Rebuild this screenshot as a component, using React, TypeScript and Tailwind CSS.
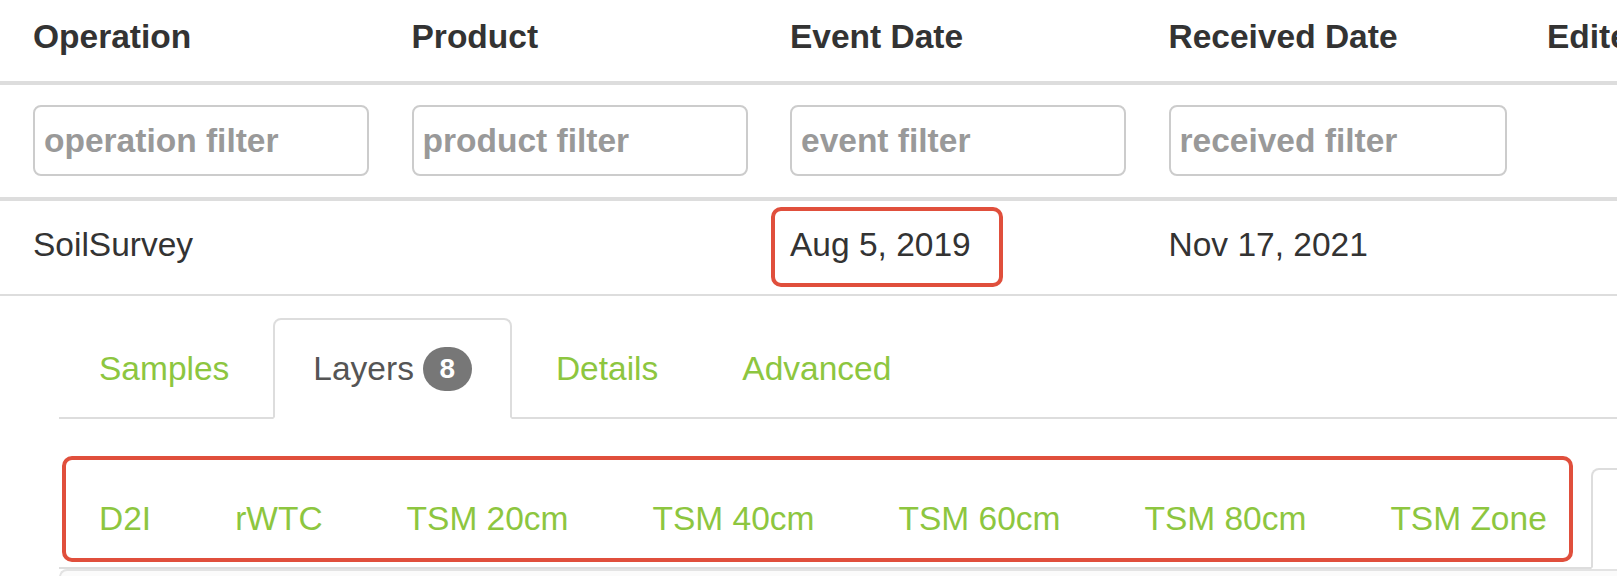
import React from "react";

type Col = {
  head: string;
  filter?: string;
  value?: string;
  marked?: boolean;
  filterWidth?: string;
};

const cols: Col[] = [
  { head: "Operation", filter: "operation filter", value: "SoilSurvey", filterWidth: "w-[336px]" },
  { head: "Product", filter: "product filter", filterWidth: "w-[336px]" },
  { head: "Event Date", filter: "event filter", value: "Aug 5, 2019", marked: true, filterWidth: "w-[336px]" },
  { head: "Received Date", filter: "received filter", value: "Nov 17, 2021", filterWidth: "w-[338px]" },
  { head: "Edited Date" },
];

const mainTabs = [
  { label: "Samples" },
  { label: "Layers", badge: 8, active: true },
  { label: "Details" },
  { label: "Advanced" },
];

const layerTabs = [
  { label: "D2I" },
  { label: "rWTC" },
  { label: "TSM 20cm" },
  { label: "TSM 40cm" },
  { label: "TSM 60cm" },
  { label: "TSM 80cm" },
  { label: "TSM Zone" },
  { label: "Texture", active: true },
];

type Tab = { label: string; badge?: number; active?: boolean };

const TabBar = ({ tabs }: { tabs: Tab[] }) => (
  <ul className="flex flex-nowrap border-b-2 border-[#ddd]">
    {tabs.map((tab) => (
      <li key={tab.label} className="mr-[4px] -mb-[2px] shrink-0">
        <a
          className={
            tab.active
              ? "flex items-center whitespace-nowrap rounded-t-[8px] border-2 border-[#ddd] border-b-white bg-white px-[38px] pt-[25px] pb-[24px] leading-[48px] text-[#555]"
              : "flex items-center whitespace-nowrap rounded-t-[8px] border-2 border-transparent px-[38px] pt-[25px] pb-[24px] leading-[48px] text-[#8dc63f]"
          }
        >
          {tab.label}
          {tab.badge !== undefined && (
            <span className="ml-[9px] flex h-[44px] w-[49px] items-center justify-center rounded-full bg-[#777] text-[28px] font-bold leading-none text-white">
              {tab.badge}
            </span>
          )}
        </a>
      </li>
    ))}
  </ul>
);

export default function App() {
  return (
    <div className="h-[576px] w-full overflow-hidden bg-white font-['Liberation_Sans',Arial,sans-serif] text-[33.5px] text-[#333]">
      {/* table */}
      <div className="w-[2000px]">
        <div className="flex border-b-4 border-[#ddd]">
          {cols.map((c) => (
            <div
              key={c.head}
              className="w-[378.5px] shrink-0 pl-[33px] pt-[13px] pb-[20px] font-bold leading-[48px] whitespace-nowrap"
            >
              {c.head}
            </div>
          ))}
        </div>

        <div className="flex border-b-4 border-[#ddd]">
          {cols.map((c) => (
            <div key={c.head} className="w-[378.5px] shrink-0 pl-[33px] pt-[20px] pb-[21px]">
              {c.filter ? (
                <input
                  placeholder={c.filter}
                  className={joinClasses(
                    "h-[71px] rounded-[8px] border-2 border-[#ccc] px-[9px] font-bold outline-none placeholder:text-[#999]",
                    c.filterWidth
                  )}
                />
              ) : (
                <div className="h-[71px]" />
              )}
            </div>
          ))}
        </div>

        <div className="flex border-b-2 border-[#ddd]">
          {cols.map((c) => (
            <div
              key={c.head}
              className="relative w-[378.5px] shrink-0 pl-[33px] pt-[20px] pb-[25px] leading-[48px] whitespace-nowrap"
            >
              {c.value ?? "\u00a0"}
              {c.marked && (
                <span className="pointer-events-none absolute left-[14px] top-[6px] h-[80px] w-[232px] rounded-[10px] border-4 border-[#e04f3c]" />
              )}
            </div>
          ))}
        </div>
      </div>

      {/* detail tabs */}
      <div className="pl-[59px] pt-[22px]">
        <TabBar tabs={mainTabs} />

        <div className="relative mt-[49px]">
          <TabBar tabs={layerTabs} />
          <span className="pointer-events-none absolute left-[3px] top-[-12px] h-[106px] w-[1511px] rounded-[10px] border-4 border-[#e04f3c]" />
        </div>

        <div className="h-[40px] rounded-tl-[8px] border-t-2 border-l-2 border-[#e3e3e3] bg-[#fbfbfb]" />
      </div>
    </div>
  );
}

function joinClasses(...parts: (string | undefined)[]) {
  return parts.filter(Boolean).join(" ");
}
